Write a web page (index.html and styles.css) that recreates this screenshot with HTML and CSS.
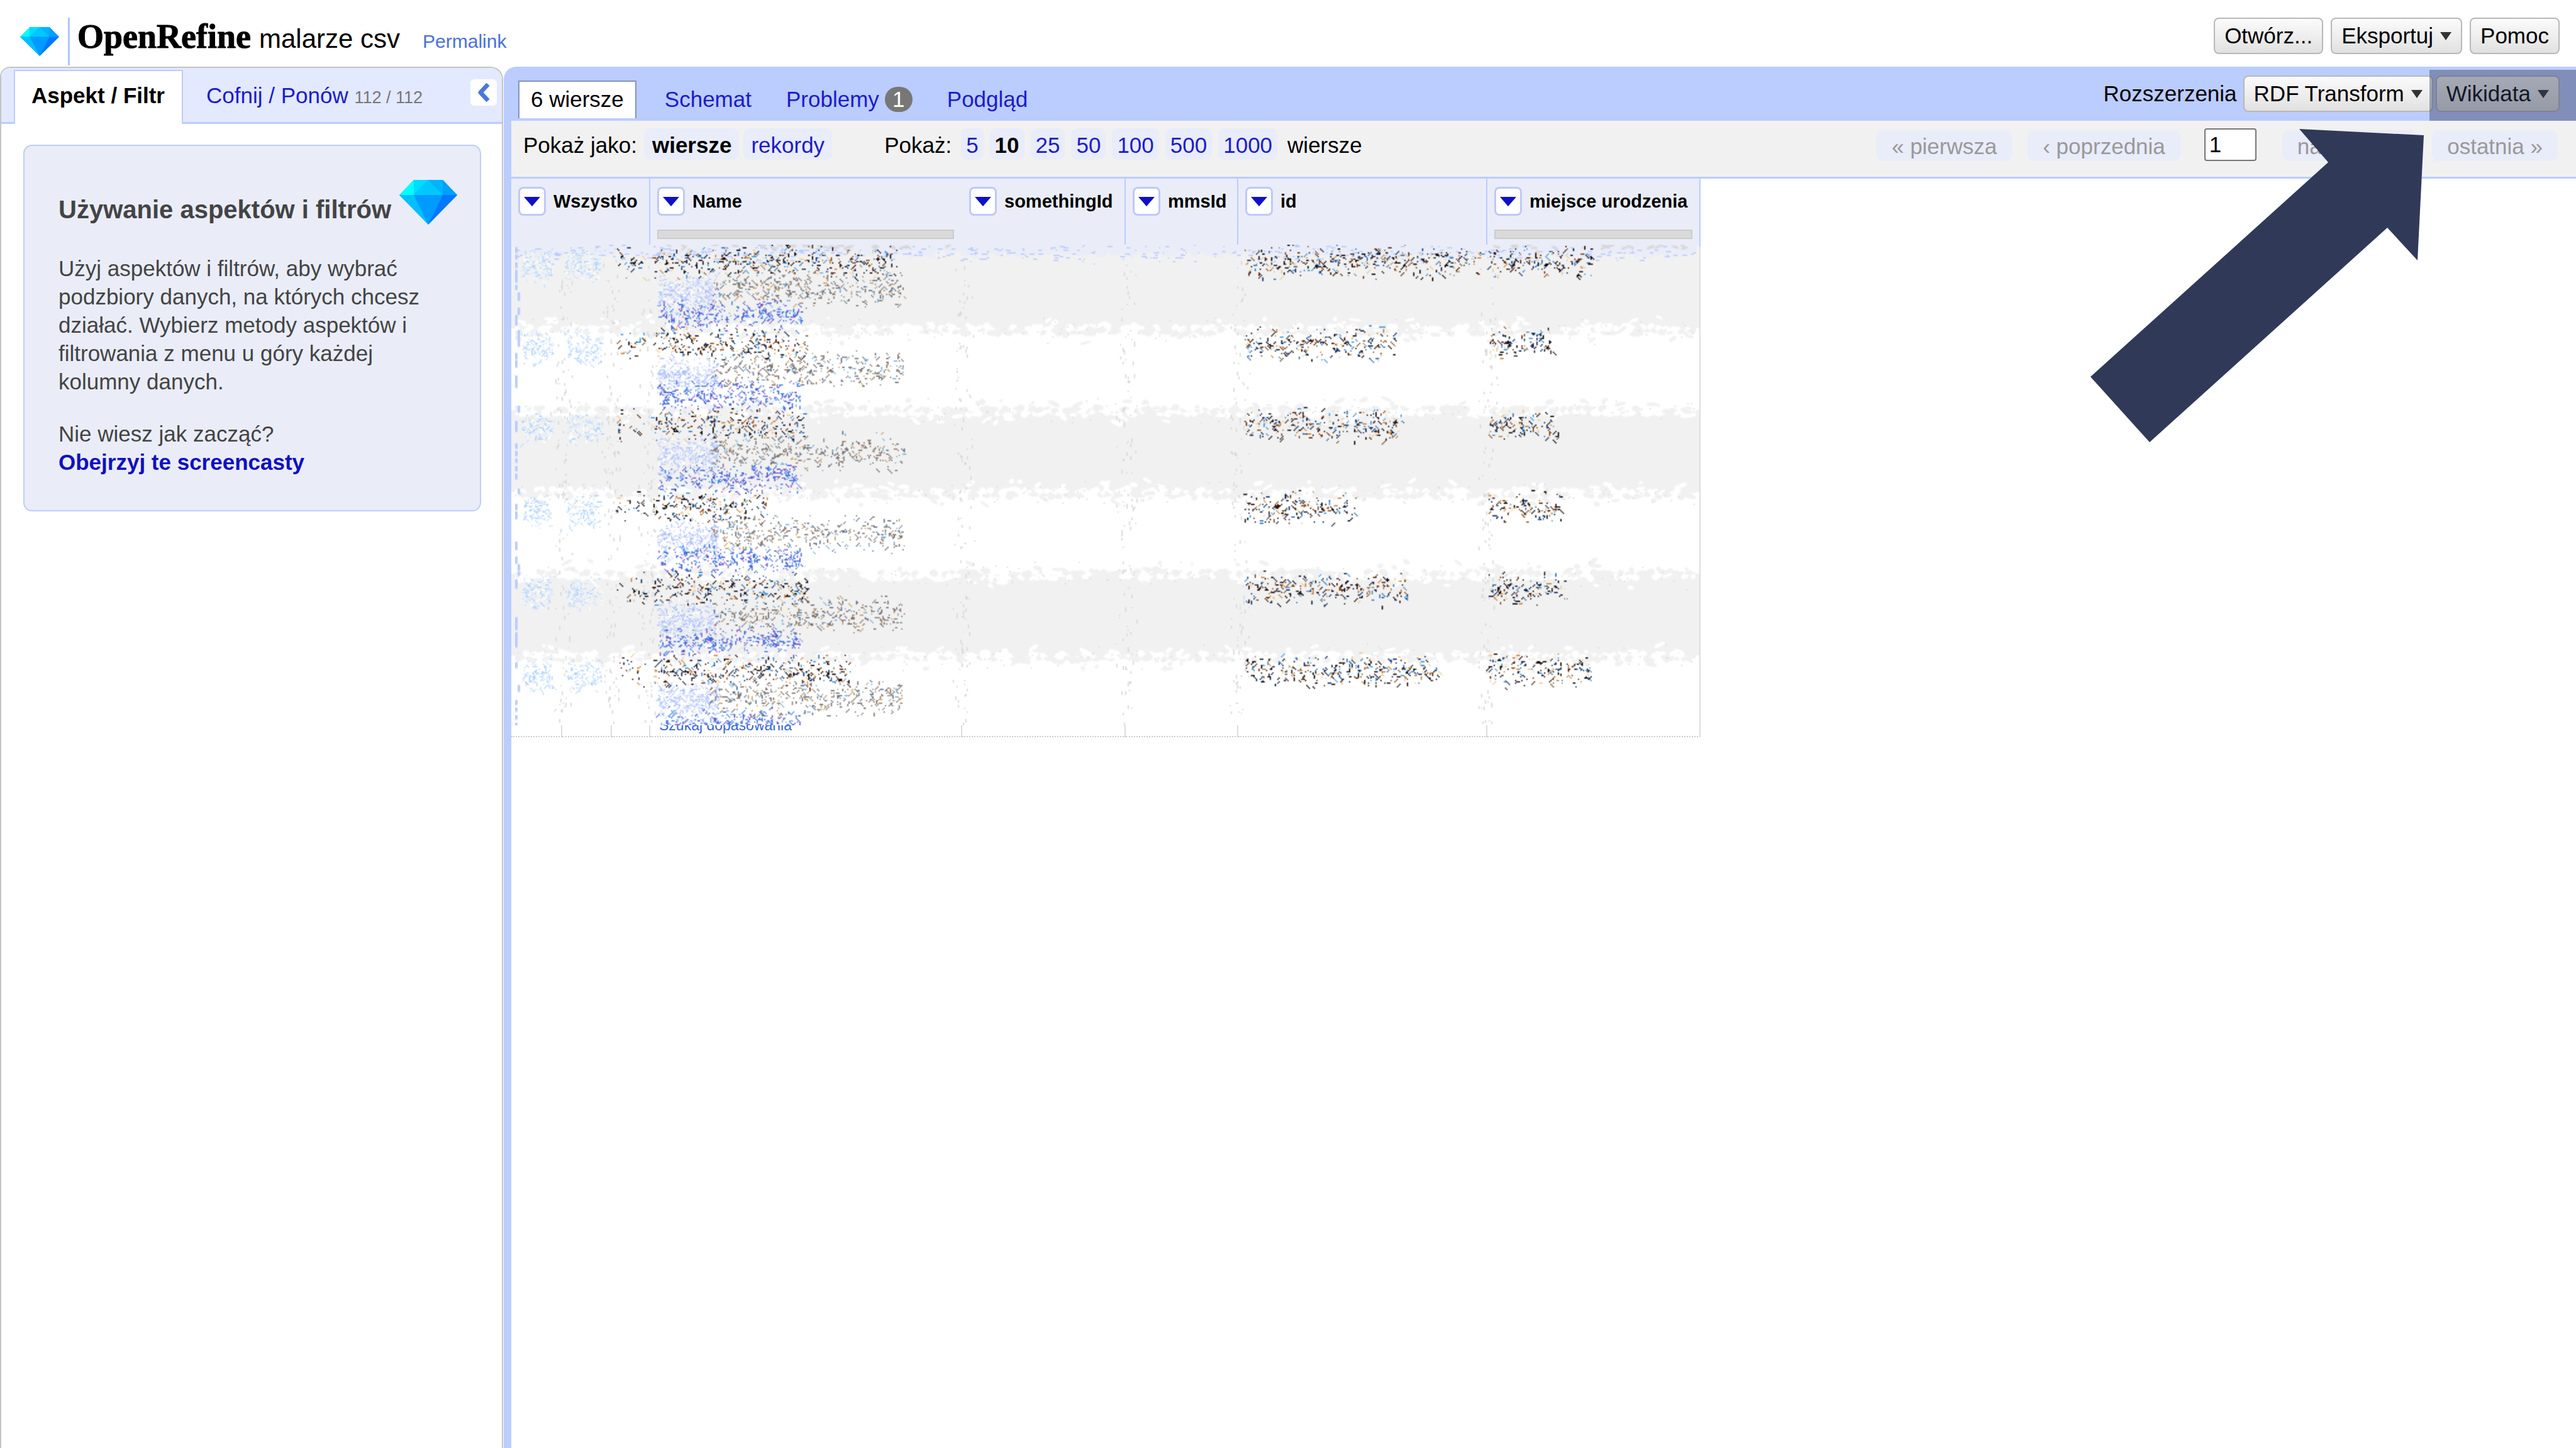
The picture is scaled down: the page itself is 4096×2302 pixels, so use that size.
FILE: index.html
```html
<!DOCTYPE html>
<html lang="pl">
<head>
<meta charset="utf-8">
<title>malarze csv - OpenRefine</title>
<link rel="stylesheet" href="styles.css">
</head>
<body>
<header class="header">
  <svg class="logo" viewBox="0 0 92 71" preserveAspectRatio="none" aria-hidden="true">
    <path fill="#0af" d="M23 0h46l23 24-46 47L0 24z"/>
    <path fill="#0ff" d="M23 0 0 24h23z"/>
    <path fill="#00dcff" d="M23 0h23L23 24z"/>
    <path fill="#00c8ff" d="M46 0 23 24h46z"/>
    <path fill="#00b4ff" d="M46 0h23v24z"/>
    <path fill="#00a0ff" d="M69 0l23 24H69z"/>
    <path fill="#00c0ff" d="M0 24h23l23 47z"/>
    <path fill="#009bff" d="M23 24h46L46 71z"/>
    <path fill="#0078ff" d="M69 24h23L46 71z"/>
  </svg>
  <div class="title">
    <h1 class="brand">OpenRefine</h1>
    <span class="project">malarze csv</span>
    <a class="permalink" href="#">Permalink</a>
  </div>
  <div class="actions">
    <button class="button" type="button">Otwórz...</button>
    <button class="button" type="button">Eksportuj<svg class="caret" viewBox="0 0 18 13" aria-hidden="true"><path d="M0 0h18L9 13z"/></svg></button>
    <button class="button" type="button">Pomoc</button>
  </div>
</header>
<main class="main">
  <aside class="side">
    <nav class="side-tabs">
      <a class="side-tab side-tab-active" href="#">Aspekt / Filtr</a>
      <a class="side-tab" href="#">Cofnij / Ponów <span class="count">112 / 112</span></a>
      <button class="collapse" type="button" aria-label="Ukryj panel"><svg class="chevron" viewBox="0 0 22 32" aria-hidden="true"><path d="M18 3 6 16l12 13" fill="none" stroke="#4a77dc" stroke-width="7" stroke-linejoin="round"/></svg></button>
    </nav>
    <section class="help">
      <div class="help-head">
        <h2 class="help-title">Używanie aspektów i filtrów</h2>
        <svg class="help-logo" viewBox="0 0 92 71" aria-hidden="true">
          <path fill="#0af" d="M23 0h46l23 24-46 47L0 24z"/>
          <path fill="#0ff" d="M23 0 0 24h23z"/>
          <path fill="#00dcff" d="M23 0h23L23 24z"/>
          <path fill="#00c8ff" d="M46 0 23 24h46z"/>
          <path fill="#00b4ff" d="M46 0h23v24z"/>
          <path fill="#00a0ff" d="M69 0l23 24H69z"/>
          <path fill="#00c0ff" d="M0 24h23l23 47z"/>
          <path fill="#009bff" d="M23 24h46L46 71z"/>
          <path fill="#0078ff" d="M69 24h23L46 71z"/>
        </svg>
      </div>
      <p class="help-text">Użyj aspektów i filtrów, aby wybrać podzbiory danych, na których chcesz działać. Wybierz metody aspektów i filtrowania z menu u góry każdej kolumny danych.</p>
      <p class="help-text">Nie wiesz jak zacząć?<br><a class="help-link" href="#">Obejrzyj te screencasty</a></p>
    </section>
  </aside>
  <section class="view">
    <div class="view-tabs">
      <a class="view-tab view-tab-active" href="#">6 wiersze</a>
      <a class="view-tab" href="#">Schemat</a>
      <a class="view-tab" href="#">Problemy<span class="badge">1</span></a>
      <a class="view-tab" href="#">Podgląd</a>
      <div class="extensions">
        <span class="ext-label">Rozszerzenia</span>
        <button class="button" type="button">RDF Transform<svg class="caret" viewBox="0 0 18 13" aria-hidden="true"><path d="M0 0h18L9 13z"/></svg></button>
        <button class="button" type="button">Wikidata<svg class="caret" viewBox="0 0 18 13" aria-hidden="true"><path d="M0 0h18L9 13z"/></svg></button>
      </div>
      <div class="highlight"></div>
    </div>
    <div class="controls">
      <div class="group group-mode">
        <span class="label">Pokaż jako:</span>
        <a class="pill pill-wide pill-on" href="#">wiersze</a>
        <a class="pill pill-wide" href="#">rekordy</a>
      </div>
      <div class="group group-size">
        <span class="label">Pokaż:</span>
        <a class="pill" href="#">5</a>
        <a class="pill pill-on" href="#">10</a>
        <a class="pill" href="#">25</a>
        <a class="pill" href="#">50</a>
        <a class="pill" href="#">100</a>
        <a class="pill" href="#">500</a>
        <a class="pill" href="#">1000</a>
        <span class="unit">wiersze</span>
      </div>
      <div class="pager">
        <span class="page-step">« pierwsza</span>
        <span class="page-step">‹ poprzednia</span>
        <input class="page-input" type="text" value="1" aria-label="Strona">
        <span class="page-step">następna ›</span>
        <span class="page-step">ostatnia »</span>
      </div>
    </div>
    <div class="grid-area">
      <div class="grid">
        <table class="data">
          <colgroup><col class="c-star"><col class="c-flag"><col class="c-index"><col class="c-name"><col class="c-something"><col class="c-mms"><col class="c-id"><col class="c-place"></colgroup>
          <thead>
            <tr>
              <th class="col" colspan="3" scope="col"><div class="col-head"><button class="menu" type="button" aria-label="Menu Wszystko"><svg class="menu-icon" viewBox="0 0 26 15" aria-hidden="true"><path d="M0 0h26L13 15z"/></svg></button>Wszystko</div></th>
              <th class="col col-open" scope="col"><div class="col-head"><button class="menu" type="button" aria-label="Menu Name"><svg class="menu-icon" viewBox="0 0 26 15" aria-hidden="true"><path d="M0 0h26L13 15z"/></svg></button>Name</div><div class="match-bar"></div></th>
              <th class="col" scope="col"><div class="col-head"><button class="menu" type="button" aria-label="Menu somethingId"><svg class="menu-icon" viewBox="0 0 26 15" aria-hidden="true"><path d="M0 0h26L13 15z"/></svg></button>somethingId</div></th>
              <th class="col" scope="col"><div class="col-head"><button class="menu" type="button" aria-label="Menu mmsId"><svg class="menu-icon" viewBox="0 0 26 15" aria-hidden="true"><path d="M0 0h26L13 15z"/></svg></button>mmsId</div></th>
              <th class="col" scope="col"><div class="col-head"><button class="menu" type="button" aria-label="Menu id"><svg class="menu-icon" viewBox="0 0 26 15" aria-hidden="true"><path d="M0 0h26L13 15z"/></svg></button>id</div></th>
              <th class="col" scope="col"><div class="col-head"><button class="menu" type="button" aria-label="Menu miejsce urodzenia"><svg class="menu-icon" viewBox="0 0 26 15" aria-hidden="true"><path d="M0 0h26L13 15z"/></svg></button>miejsce urodzenia</div><div class="match-bar"></div></th>
            </tr>
          </thead>
          <tbody>
            <tr class="row row-odd"><td></td><td></td><td></td><td></td><td></td><td></td><td></td><td></td></tr>
            <tr class="row"><td></td><td></td><td></td><td></td><td></td><td></td><td></td><td></td></tr>
            <tr class="row row-odd"><td></td><td></td><td></td><td></td><td></td><td></td><td></td><td></td></tr>
            <tr class="row"><td></td><td></td><td></td><td></td><td></td><td></td><td></td><td></td></tr>
            <tr class="row row-odd"><td></td><td></td><td></td><td></td><td></td><td></td><td></td><td></td></tr>
            <tr class="row"><td></td><td></td><td></td><td class="cell"><a class="match" href="#">Szukaj dopasowania</a></td><td></td><td></td><td></td><td></td></tr>
          </tbody>
        </table>
        <canvas class="scatter" width="939" height="382"></canvas>
      </div>
    </div>
  </section>
</main>
<svg class="pointer" viewBox="0 0 530 498" aria-hidden="true"><path fill="#303a58" d="M332 0 530 10 520 209 472 157 94 498 0 394 378 53z"/></svg>
<script src="scatter.js"></script>
</body>
</html>
```
FILE: styles.css
```css
* { box-sizing: border-box; }
body {
  margin: 0;
  min-height: 100vh;
  display: flex;
  flex-direction: column;
  position: relative;
  background: #fff;
  color: #000;
  font: 35px/40px "Liberation Sans", Arial, sans-serif;
}
a { color: #1c1ccc; text-decoration: none; }
button, input { font: inherit; color: inherit; }

.header { display: flex; height: 106px; padding: 28px 26px 0 32px; }
.logo { width: 62px; height: 46px; margin: 15px 14px 0 0; }
.title {
  display: flex;
  align-items: baseline;
  height: 76px;
  padding-left: 12px;
  border-left: 3px solid #b0c6fb;
}
.brand {
  margin: 0;
  font: bold 54px/60px "Liberation Serif", "Times New Roman", serif;
  -webkit-text-stroke: 1px #000;
}
.project { margin-left: 13px; font-size: 42px; }
.permalink { margin-left: 36px; font-size: 30px; color: #4a70dc; }
.actions { display: flex; gap: 12px; margin-left: auto; }
.button {
  display: flex;
  align-items: center;
  height: 58px;
  padding: 0 15px;
  border: 2px solid #b8b8b8;
  border-radius: 8px;
  background: linear-gradient(#fbfbfb, #e1e1e1);
  white-space: nowrap;
}
.caret { width: 18px; height: 13px; margin-left: 11px; fill: #333; }

.main { flex: 1; display: flex; }
.side {
  width: 800px;
  flex: none;
  border: 2px solid #c4c4c4;
  border-bottom: 0;
  border-radius: 16px 20px 0 0;
  overflow: hidden;
}
.side-tabs {
  display: flex;
  height: 89px;
  padding: 3px 8px 0 20px;
  background: #e3e9ff;
  box-shadow: inset 0 -3px #bbccff;
}
.side-tab { padding: 21px 0 0 37px; white-space: nowrap; }
.side-tab-active {
  width: 269px;
  padding: 19px 0 0 26px;
  border: 2px solid #bbccff;
  border-bottom: 0;
  background: #fff;
  color: #000;
  font-weight: bold;
}
.count { font-size: 27px; color: #777; }
.collapse {
  width: 42px;
  height: 42px;
  margin: 15px 0 0 auto;
  padding: 0;
  border: 0;
  border-radius: 6px;
  background: #fff;
  display: grid;
  place-items: center;
}
.chevron { width: 22px; height: 32px; }
.help {
  margin: 33px 33px 0 35px;
  padding: 54px 36px 54px 54px;
  border: 2px solid #bfcdfb;
  border-radius: 14px;
  background: #eaedf8;
  color: #444;
}
.help-head { display: flex; gap: 13px; margin-bottom: 47px; }
.help-title { margin: 23px 0 0; font-size: 40px; line-height: 48px; white-space: nowrap; }
.help-logo { width: 92px; height: 71px; flex: none; }
.help-text { margin: 0 40px 38px 0; line-height: 45px; }
.help-text:last-child { margin-bottom: 0; }
.help-link { font-weight: bold; color: #1010c0; }

.view {
  flex: 1;
  min-width: 0;
  margin-left: 1px;
  padding-left: 12px;
  border-radius: 20px 0 0 0;
  background: #bbccff;
  display: flex;
  flex-direction: column;
}
.view-tabs { position: relative; display: flex; height: 86px; padding: 22px 26px 0 11px; }
.view-tab { display: flex; height: 60px; padding: 10px 18px 0; margin-right: 19px; white-space: nowrap; }
.view-tab-active { padding: 8px 18px 0; margin-right: 27px; border: 2px solid #8592c4; border-bottom: 0; background: #fff; color: #000; }
.badge { width: 44px; height: 40px; margin-left: 9px; border-radius: 20px; background: #777; color: #fff; text-align: center; }
.extensions { display: flex; align-items: flex-start; gap: 4px; margin: -8px 0 0 auto; }
.ext-label { margin: 9px 6px 0 0; }
.highlight { position: absolute; top: 5px; right: 0; bottom: 0; width: 233px; background: rgba(48, 58, 88, 0.42); }

.controls {
  display: flex;
  height: 92px;
  padding: 12px 29px 0 19px;
  border-bottom: 3px solid #bbccff;
  background: #f1f1f1;
  white-space: nowrap;
}
.group { display: flex; align-items: flex-start; }
.group-mode { gap: 7px; margin-right: 83px; }
.group-size { gap: 10px; }
.label { padding-top: 7px; margin-right: 5px; }
.unit { padding: 7px 0 0 6px; }
.pill { height: 50px; padding: 7px 8px 0; border-radius: 10px; background: #e9ecf9; }
.pill-wide { padding: 7px 12px 0; }
.pill-on { color: #000; font-weight: bold; }
.pager { display: flex; align-items: flex-start; gap: 25px; margin-left: auto; }
.page-step { height: 49px; margin-top: 3px; padding: 6px 24px 0; border-radius: 10px; background: #e9ecf9; color: #999; }
.page-input { width: 83px; height: 52px; margin: 0 16px 0 13px; padding: 0 6px; border: 2px solid #777; border-radius: 4px; background: #fff; }

.grid-area { flex: 1; background: #fff; }
.grid { position: relative; width: fit-content; }
.data { width: 1891px; table-layout: fixed; border-collapse: separate; border-spacing: 0; }
.c-star { width: 81px; }
.c-flag { width: 79px; }
.c-index { width: 61px; }
.c-name { width: 496px; }
.c-something { width: 260px; }
.c-mms { width: 179px; }
.c-id { width: 396px; }
.c-place { width: 339px; }
.col {
  height: 108px;
  padding: 13px 11px 0;
  border-right: 2px solid #bbccff;
  background: #eaedf8;
  font-size: 29px;
  text-align: left;
  vertical-align: top;
  white-space: nowrap;
}
.col-open { border-right-color: #eaedf8; }
.col-head { display: flex; align-items: center; gap: 12px; height: 46px; }
.menu {
  width: 44px;
  height: 46px;
  padding: 0;
  border: 3px solid #bfc9f6;
  border-radius: 8px;
  background: #fff;
  display: grid;
  place-items: center;
}
.menu-icon { width: 26px; height: 15px; fill: #1010c8; }
.match-bar { height: 15px; margin-top: 22px; border: 2px solid #ccc; background: #dadada; }
.row { height: 130px; }
.row td { padding: 0 14px; border-right: 2px solid #ddd; }
.row:last-child td { border-bottom: 2px dotted #ccc; }
.row-odd { background: #f1f1f1; }
.row .cell { vertical-align: bottom; }
.match { display: block; font-size: 23px; line-height: 34px; color: #3a66d8; }
.scatter { position: absolute; left: 6px; top: 105px; width: 1878px; height: 764px; }

.pointer { position: absolute; top: 205px; right: 242px; width: 530px; height: 498px; }
```
FILE: scatter.js
```js
const ctx = document.querySelector('.scatter').getContext('2d');
const W = 939, H = 382, ROW = 65, TOP = 2.5;
let seed = 20231;
const rnd = () => {
  seed = (seed + 0x6D2B79F5) | 0;
  let t = Math.imul(seed ^ (seed >>> 15), 1 | seed);
  t = (t + Math.imul(t ^ (t >>> 7), 61 | t)) ^ t;
  return ((t ^ (t >>> 14)) >>> 0) / 4294967296;
};
const bell = () => (rnd() + rnd()) / 2;
const pick = a => a[Math.floor(rnd() * a.length)];

const DARK = ['#000', '#000', '#111a33', '#0a2a66', '#2a6fb8', '#3c96de', '#5a2410', '#8a4a1c', '#c8813a', '#f0c890', '#200808'];
const MUTED = ['#777', '#86746a', '#66708a', '#a08070', '#c99f68', '#7cb4dc', '#8a8a8a', '#707070'];
const LINK = ['#3a66d8', '#4c78e0', '#5a50cc', '#3a8ae8', '#8a66d8', '#7fb0f4', '#4a70e0'];
const PALE = ['#bccbfb', '#c8d6ff', '#a9c0f8', '#d5defc', '#fff'];
const STAR = ['#bfdcff', '#c8e0ff', '#d4e8ff', '#b0d2fa', '#fff'];

function speck(x, y, color) {
  ctx.fillStyle = color;
  x = Math.round(x); y = Math.round(y);
  const n = 1 + Math.floor(rnd() * 3);
  const dx = Math.floor(rnd() * 3) - 1, dy = rnd() < 0.6 ? 1 : 0;
  for (let i = 0; i < n; i++) ctx.fillRect(x + dx * i, y + dy * i, 1, 1);
}
function cluster(x0, x1, y0, y1, count, colors) {
  for (let i = 0; i < count; i++) {
    speck(x0 + rnd() * (x1 - x0), y0 + bell() * (y1 - y0), pick(colors));
  }
}
function blob(x, y, w, h, color) {
  ctx.fillStyle = color;
  ctx.beginPath();
  ctx.ellipse(x, y, w, h, (rnd() - 0.5) * 1.4, 0, Math.PI * 2);
  ctx.fill();
}
const rowColor = r => r % 2 ? '#ffffff' : '#f1f1f1';

for (let r = 0; r < 6; r++) {
  ctx.fillStyle = rowColor(r);
  ctx.fillRect(0, TOP + r * ROW, W, ROW);
}
// Torn edge under the column headings
ctx.fillStyle = '#eaedf8';
ctx.fillRect(0, 0, W, 5);
for (let x = 0; x < W; x += 3) blob(x, 3 + rnd() * 5, 3, 2, '#eaedf8');
for (let i = 0; i < 420; i++) {
  ctx.fillStyle = '#bbccff';
  ctx.fillRect(Math.round(rnd() * W), Math.round(bell() * 17 - 2), 1 + Math.floor(rnd() * 4), 1);
}
for (const [a, b] of [[116, 345], [780, 932]]) {
  for (let i = 0; i < (b - a) / 8; i++) blob(a + rnd() * (b - a), rnd() * 3, 3, 1, '#d8d8da');
}
// Torn edges between the rows
for (let r = 1; r < 6; r++) {
  const y = TOP + r * ROW;
  for (let x = 0; x < W; x += 3) {
    const up = rnd() < 0.5;
    blob(x, y + (up ? -1 : 1) * rnd() * 3, 3, 1 + rnd() * 2, rowColor(up ? r : r - 1));
  }
  for (let i = 0; i < 150; i++) {
    const d = (bell() - 0.5) * 24;
    blob(rnd() * W, y + d, 1 + rnd() * 4, 1 + rnd(), rowColor(d < 0 ? r : r - 1));
  }
  for (let i = 0; i < 150; i++) {
    ctx.fillStyle = '#dcdcdc';
    ctx.fillRect(Math.round(rnd() * W), Math.round(y + (bell() - 0.5) * 24), 1, 1);
  }
}
// Column rules
for (const x of [38, 76, 106, 356, 486, 576, 773]) {
  for (let i = 0; i < 120; i++) {
    ctx.fillStyle = '#d9d9d9';
    ctx.fillRect(Math.round(x + (bell() - 0.5) * 18), Math.round(12 + rnd() * (H - 14)), 1, 1 + Math.floor(rnd() * 3));
  }
}
for (let y = 2; y < H; y += 6) {
  ctx.fillStyle = '#bbccff';
  if (rnd() < 0.75) ctx.fillRect(rnd() < 0.8 ? 0 : 2, y, 2, 3 + rnd() * 6);
}
// Cell values: right ends of the name, id and place columns, row by row
const rows = [[304, 768, 855], [232, 700, 825], [230, 705, 829], [200, 668, 831], [234, 709, 837], [266, 734, 855]];
rows.forEach(([name, id, place], r) => {
  const y = TOP + r * ROW;
  cluster(6, 29, y - 1, y + 29, 120, STAR);
  cluster(41, 68, y - 1, y + 29, 120, STAR);
  cluster(80, 103, y - 4, y + 25, 24, DARK);
  cluster(114, 162, y + 18, y + 54, 380, PALE);
  cluster(156, 309, y + 15, y + 48, 350, MUTED);
  cluster(114, 227, y + 39, y + 66, 280, LINK);
  cluster(110, name, y - 4, y + 25, (name - 110) * 2, DARK);
  cluster(580, id, y - 4, y + 25, (id - 580) * 2, DARK);
  cluster(774, place, y - 4, y + 25, (place - 774) * 2, DARK);
});
```
